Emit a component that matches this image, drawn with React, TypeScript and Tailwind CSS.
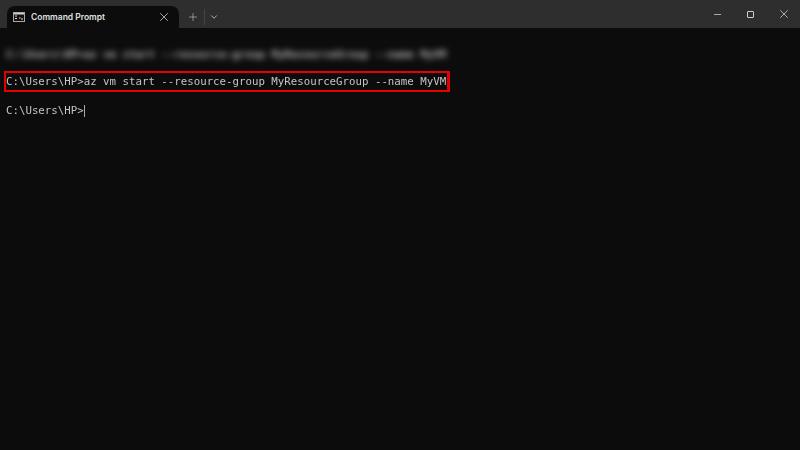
import { ChevronDown, Plus, X } from 'lucide-react'

const COMMAND = 'az vm start --resource-group MyResourceGroup --name MyVM'

export default function App() {
  return (
    <div className="w-[800px] h-[450px] overflow-hidden flex flex-col bg-[#0c0c0c] font-['Liberation_Sans',sans-serif]">
      {/* title bar */}
      <div className="h-7 shrink-0 flex items-end bg-[#2e2e2e] pl-[7px]">
        <div className="w-[172px] h-[22px] flex items-center rounded-t-lg bg-[#0c0c0c] pl-[6px] pr-[8px]">
          <svg width="12" height="10" viewBox="0 0 12 10" className="shrink-0 mr-[6px]">
            <rect x="0.5" y="0.5" width="11" height="9" fill="#111" stroke="#a8a8a8" />
            <rect x="1" y="1" width="10" height="1.5" fill="#d0d0d0" />
            <path d="M2 4h2M2 6.5h2M6 6h1.5M8 7h2" stroke="#e0e0e0" strokeWidth="1" />
          </svg>
          <span className="flex-1 text-[8.5px] font-['Inter',sans-serif] font-semibold text-[#e0e0e0] leading-none">Command Prompt</span>
          <X size={14} strokeWidth={1.25} className="text-[#e0e0e0]" />
        </div>
        <div className="h-7 flex items-center pt-[6px] pl-[8px]">
          <Plus size={12} strokeWidth={1.25} className="text-[#c8c8c8]" />
          <div className="w-px h-4 ml-[5px] mr-[4px] bg-[#454545]" />
          <ChevronDown size={10} strokeWidth={2} className="text-[#c8c8c8]" />
        </div>
        <div className="flex-1" />
        <div className="h-7 flex items-center">
          <div className="w-[33px] flex justify-center"><div className="w-[7px] h-px bg-[#a8a8a8]" /></div>
          <div className="w-[33px] flex justify-center"><div className="w-[7px] h-[7px] border border-[#cfcfcf] rounded-[1px]" /></div>
          <div className="w-[33px] flex justify-center"><X size={14} strokeWidth={1.25} className="text-[#d8d8d8]" /></div>
        </div>
      </div>

      {/* terminal */}
      <div className="flex-1 pt-[20px] pl-[6px] font-['DejaVu_Sans_Mono',monospace] text-[10.75px] leading-[13.75px] text-[#c4c4c4] whitespace-pre">
        <div className="blur-[3px] opacity-90 font-bold">C:\Users\HP&gt;{COMMAND}</div>
        <div className="mt-[9.25px] -ml-[2px] w-[446px] h-[21px] flex items-center border-2 border-r-[3px] border-[#e60000]">
          <span className="blur-[0.4px]">C:\Users\HP&gt;{COMMAND}</span>
        </div>
        <div className="mt-[12px] flex items-center">
          <span className="blur-[0.4px]">C:\Users\HP&gt;</span>
          <div className="w-px h-[12px] bg-[#a8a8a8]" />
        </div>
      </div>
    </div>
  )
}
